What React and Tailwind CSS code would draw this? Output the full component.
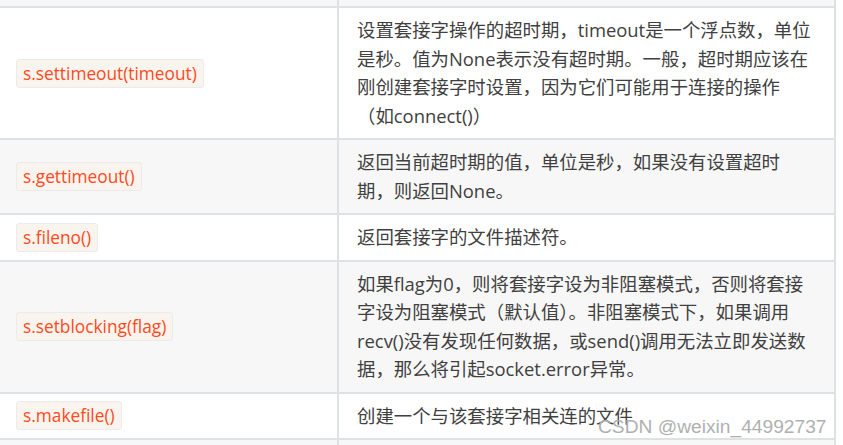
const rows = [
  {
    code: "s.settimeout(timeout)",
    desc: "设置套接字操作的超时期，timeout是一个浮点数，单位是秒。值为None表示没有超时期。一般，超时期应该在刚创建套接字时设置，因为它们可能用于连接的操作（如connect()）",
    gray: false,
  },
  {
    code: "s.gettimeout()",
    desc: "返回当前超时期的值，单位是秒，如果没有设置超时期，则返回None。",
    gray: true,
  },
  {
    code: "s.fileno()",
    desc: "返回套接字的文件描述符。",
    gray: false,
  },
  {
    code: "s.setblocking(flag)",
    desc: "如果flag为0，则将套接字设为非阻塞模式，否则将套接字设为阻塞模式（默认值）。非阻塞模式下，如果调用recv()没有发现任何数据，或send()调用无法立即发送数据，那么将引起socket.error异常。",
    gray: true,
  },
  {
    code: "s.makefile()",
    desc: "创建一个与该套接字相关连的文件",
    gray: false,
  },
];

const Row = ({ code, desc, gray }) => (
  <div className={`flex border-b-2 border-[#dfe2e5] ${gray ? "bg-[#f7f7f7]" : "bg-white"}`}>
    <div className="w-[339px] shrink-0 border-r-2 border-[#dfe2e5] pl-4 flex items-center">
      <code className="px-[6px] py-[1px] leading-[25px] text-[17.3px] text-[#ff4a22] bg-[#f9f5ee] border border-[#ebebeb] rounded-[3px] font-['Open_Sans','Noto_Sans_CJK_SC',sans-serif]">
        {code}
      </code>
    </div>
    <div className="flex-1 border-r-2 border-[#dfe2e5] pl-[18px] pr-[20px] py-2 text-[18.4px] leading-[28.5px] text-[#404040]">
      {desc}
    </div>
  </div>
);

export default function App() {
  return (
    <div className="relative w-[843px] h-[445px] overflow-hidden bg-white font-['Open_Sans','Noto_Sans_CJK_SC',sans-serif]">
      <div className="w-[836px]">
        {/* partial row above */}
        <div className="flex h-[8px] border-b-2 border-[#dfe2e5] bg-[#f7f7f7]">
          <div className="w-[339px] shrink-0 border-r-2 border-[#dfe2e5]" />
          <div className="flex-1 border-r-2 border-[#dfe2e5]" />
        </div>
        {rows.map((r) => (
          <Row key={r.code} {...r} />
        ))}
        <div className="flex h-[20px] bg-[#f7f7f7]">
          <div className="w-[339px] shrink-0 border-r-2 border-[#dfe2e5]" />
          <div className="flex-1 border-r-2 border-[#dfe2e5]" />
        </div>
      </div>

      {/* watermark */}
      <div className="absolute left-[598px] top-[416px] text-[19.2px] leading-[22px] text-[#b0b0b0] font-['Liberation_Sans',Arial,sans-serif] whitespace-nowrap">
        CSDN @weixin_44992737
      </div>
    </div>
  );
}
